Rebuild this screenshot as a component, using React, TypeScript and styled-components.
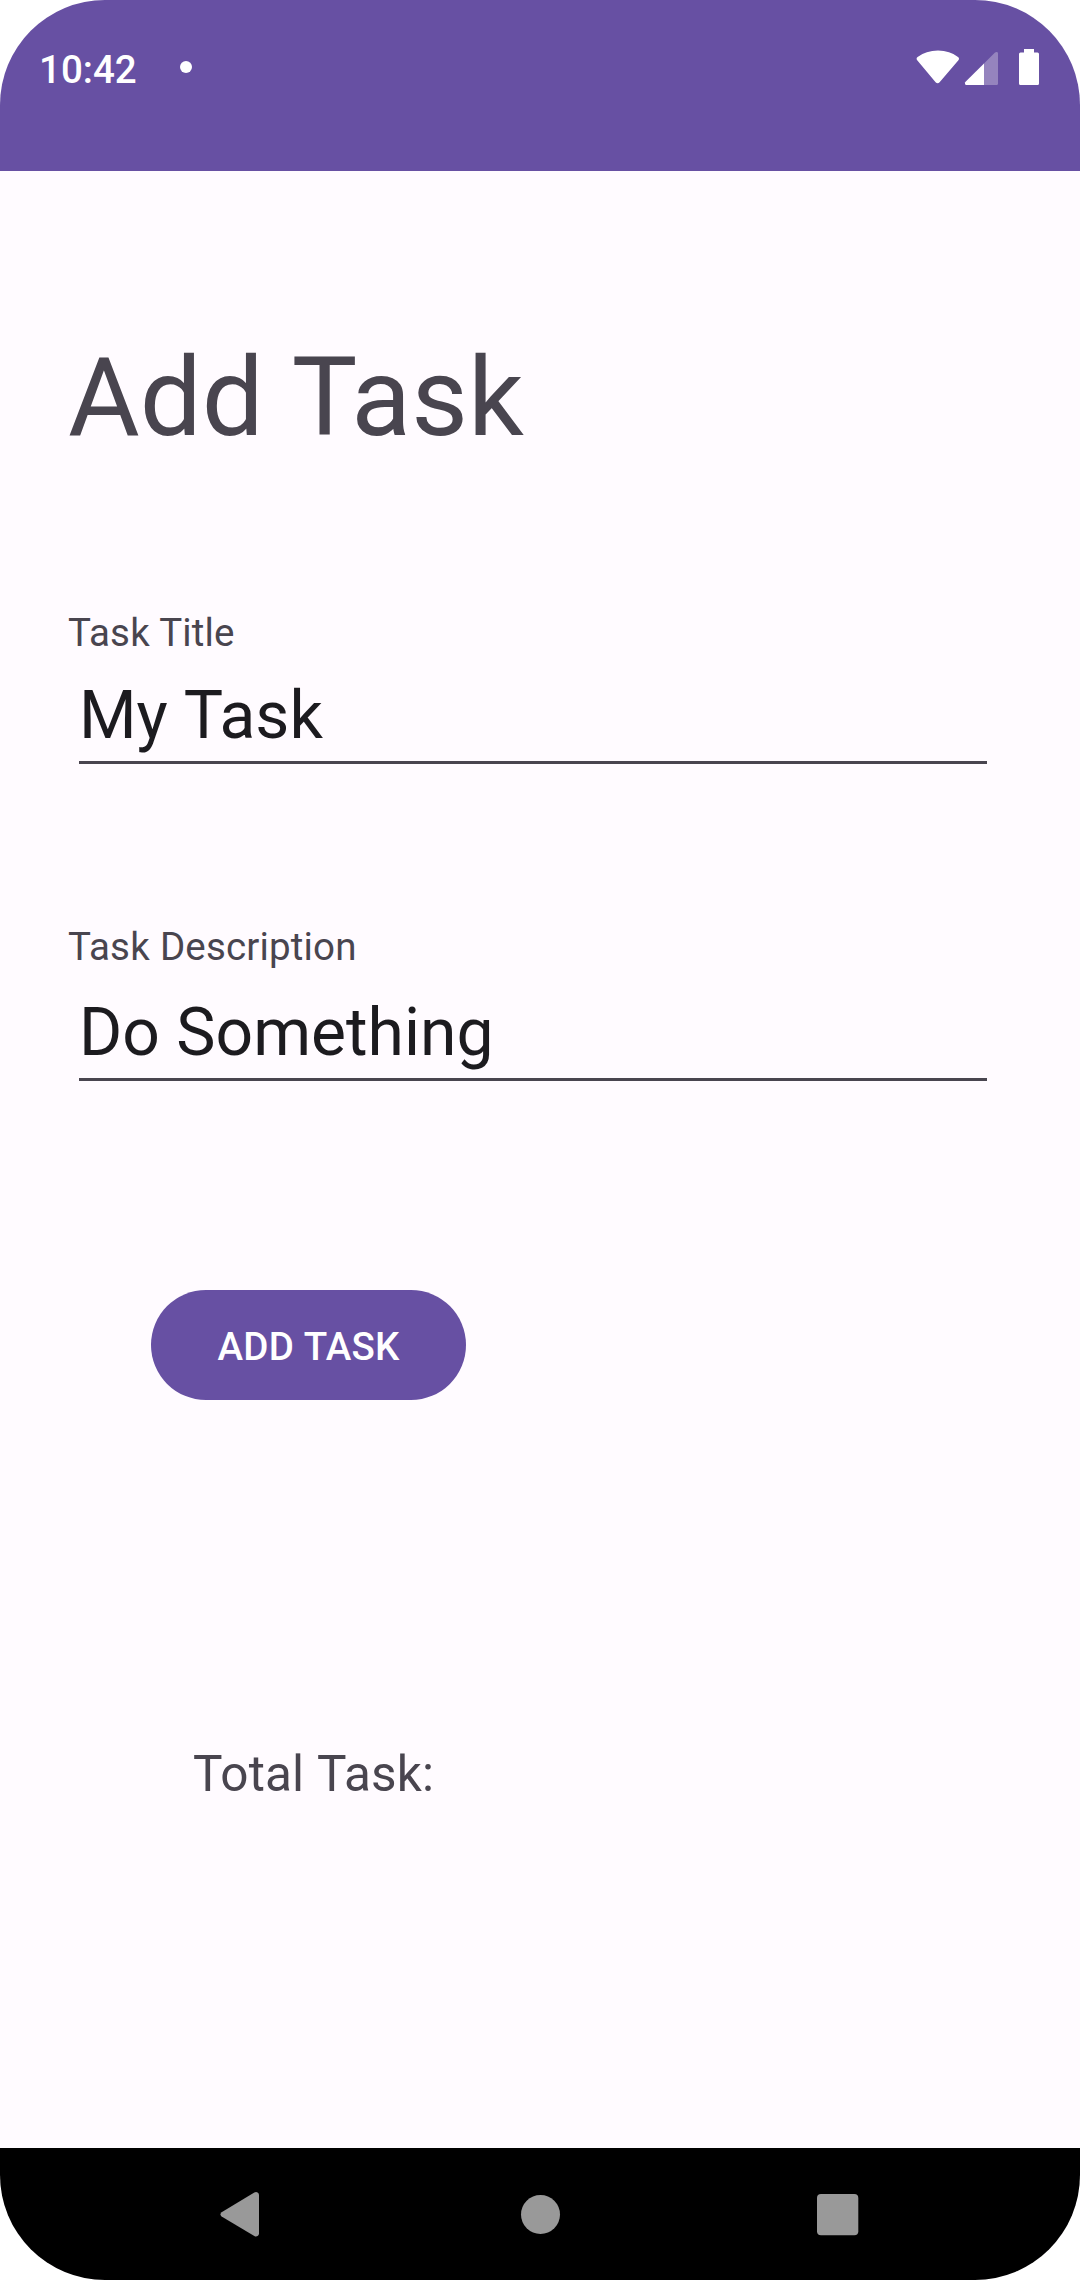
import React from "react";
import styled, { createGlobalStyle } from "styled-components";

const purple = "#6750a3";
const surface = "#fffbff";
const muted = "#49454f";

const GlobalStyle = createGlobalStyle`
  * { box-sizing: border-box; }
  body { margin: 0; background: #fff; font-family: Roboto, "Liberation Sans", sans-serif; }
`;

const Screen = styled.main`
  width: 1080px;
  height: 2280px;
  display: flex;
  flex-direction: column;
  overflow: hidden;
  border-radius: 105px;
  background: ${surface};
`;

const StatusBar = styled.header`
  height: 171px;
  flex: none;
  display: flex;
  align-items: flex-start;
  padding: 47px 40px 0 39px;
  background: ${purple};
  color: #fff;
`;

const Clock = styled.time`
  width: 141px;
  font-size: 38.5px;
  font-weight: 500;
  line-height: 45px;
`;

const Dot = styled.span`
  width: 12px;
  height: 12px;
  margin-top: 14px;
  border-radius: 50%;
  background: #fff;
`;

const StatusIcons = styled.svg`
  width: 124px;
  height: 38px;
  margin: 1px 0 0 auto;
`;

const Content = styled.section`
  flex: 1;
  display: flex;
  flex-direction: column;
  align-items: flex-start;
  padding: 162px 93px 0 68px;
`;

const Title = styled.h1`
  margin: 0 0 148px;
  font-size: 110px;
  font-weight: 400;
  line-height: 129px;
  word-spacing: 2.8px;
  color: ${muted};
`;

const Field = styled.div<{ $gap: number; $after: number }>`
  align-self: stretch;
  display: flex;
  flex-direction: column;
  gap: ${(p) => p.$gap}px;
  margin-bottom: ${(p) => p.$after}px;
`;

const Label = styled.label`
  font-size: 38.5px;
  line-height: 45px;
  letter-spacing: 0.16px;
  word-spacing: 0.4px;
  color: ${muted};
`;

const Value = styled.div<{ $wordSpacing?: number }>`
  height: 87px;
  margin-left: 11px;
  border-bottom: 3px solid ${muted};
  font-size: 66px;
  line-height: 77px;
  word-spacing: ${(p) => p.$wordSpacing ?? 0}px;
  color: #1c1b1f;
`;

const AddButton = styled.button`
  width: 315px;
  height: 110px;
  margin: 0 0 345px 83px;
  padding: 2px 0 0;
  border: 0;
  border-radius: 55px;
  background: ${purple};
  color: #fff;
  font: 500 38.5px/45px Roboto, "Liberation Sans", sans-serif;
  letter-spacing: 0.18px;
  word-spacing: 1px;
`;

const Total = styled.p`
  margin: 0 0 0 125px;
  font-size: 49.5px;
  line-height: 58px;
  letter-spacing: 0.15px;
  word-spacing: 1.3px;
  color: ${muted};
`;

const NavBar = styled.nav`
  height: 132px;
  flex: none;
  display: flex;
  justify-content: space-between;
  align-items: center;
  padding: 0 221px 0 220px;
  background: #000;
`;

const NavIcon = styled.svg`
  width: 42px;
  height: 48px;
  fill: #999;
`;

export default function App() {
  return (
    <>
      <GlobalStyle />
      <Screen>
        <StatusBar>
          <Clock>10:42</Clock>
          <Dot />
          <StatusIcons viewBox="916 48 124 38" fill="#fff">
            <path d="M917.2 60.2Q915.8 58.3 917.6 56.9Q926 50.4 938 50.4Q950 50.4 958 56.9Q959.8 58.3 958.4 60.2L939.6 82.2Q937.6 84.2 935.6 82.2Z" />
            <path d="M984 63.5V85H966.5Q965 85 965 83.5V82.5L965.8 81.5Z" />
            <path d="M984 63.5L995 52.6Q996 51.8 997 52Q998 52.4 998 53.5V83.5Q998 85 996.5 85H984Z" opacity=".3" />
            <path d="M1024 49H1034V52.5H1037.5Q1039 52.5 1039 54V83.5Q1039 85 1037.5 85H1020.5Q1019 85 1019 83.5V54Q1019 52.5 1020.5 52.5H1024Z" />
          </StatusIcons>
        </StatusBar>
        <Content>
          <Title>Add Task</Title>
          <Field $gap={22} $after={160}>
            <Label>Task Title</Label>
            <Value $wordSpacing={0.8}>My Task</Value>
          </Field>
          <Field $gap={25} $after={209}>
            <Label>Task Description</Label>
            <Value>Do Something</Value>
          </Field>
          <AddButton>ADD TASK</AddButton>
          <Total>Total Task:</Total>
        </Content>
        <NavBar>
          <NavIcon viewBox="0 0 42 48">
            <path d="M1.6 22.2L34.3 2.6Q36 1.6 37.6 2.5Q39 3.3 39 5V43.6Q39 45.3 37.6 46.1Q36 47 34.3 46L1.6 26.4Q.5 25.6 .5 24.3Q.5 23 1.6 22.2Z" />
          </NavIcon>
          <NavIcon viewBox="0 0 42 48">
            <circle cx="21.5" cy="24.5" r="19.5" />
          </NavIcon>
          <NavIcon viewBox="0 0 42 48">
            <rect x="0" y="4" width="41.3" height="41.3" rx="4" />
          </NavIcon>
        </NavBar>
      </Screen>
    </>
  );
}
